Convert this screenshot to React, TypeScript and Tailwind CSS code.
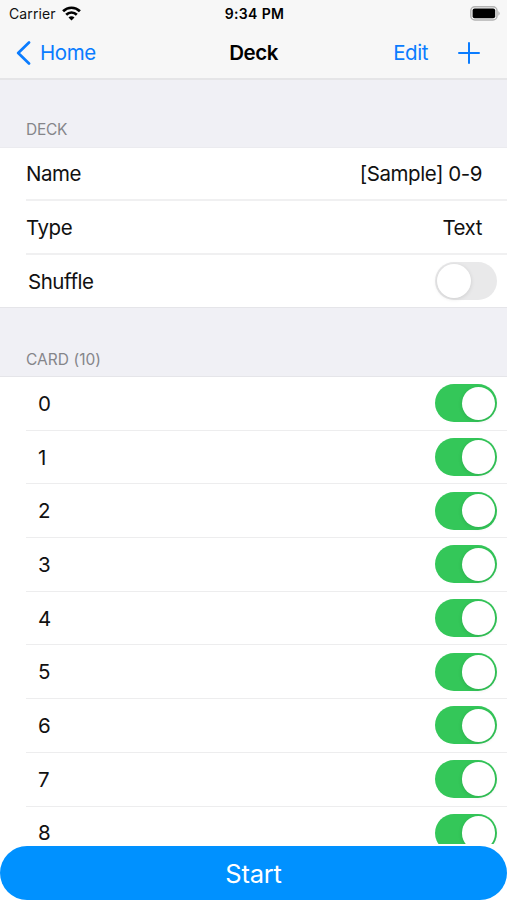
import React, { useState } from 'react';

const cards = ['0', '1', '2', '3', '4', '5', '6', '7', '8'];

interface ToggleProps {
  on: boolean;
  label: string;
  onChange: () => void;
}

const Toggle: React.FC<ToggleProps> = ({ on, label, onChange }) => (
  <button
    role="switch"
    aria-checked={on}
    aria-label={label}
    onClick={onChange}
    className={`flex h-[38px] w-[62px] shrink-0 items-center rounded-full px-[2px] ${
      on ? 'justify-end bg-[#34c759]' : 'justify-start bg-[#e9e9ea]'
    }`}
  >
    <span className="h-[33.5px] w-[33.5px] rounded-full bg-white shadow-[0_1px_4px_rgba(0,0,0,0.12)]" />
  </button>
);

const App: React.FC = () => {
  const [shuffle, setShuffle] = useState(false);
  const [enabled, setEnabled] = useState<boolean[]>(cards.map(() => true));

  const toggleCard = (index: number) =>
    setEnabled(enabled.map((value, i) => (i === index ? !value : value)));

  return (
    <div className="flex h-[900px] w-[507px] flex-col overflow-hidden bg-white font-['Inter','Liberation_Sans',sans-serif] text-[20.5px] tracking-[-0.45px] text-[#111]">
      {/* Status bar and navigation */}
      <header className="h-[80px] shrink-0 border-b-2 border-[#e5e5e7] bg-[#f7f7f7]">
        <div className="grid h-[27px] grid-cols-[1fr_auto_1fr] items-center pl-[9px] pr-[7px] text-[14px]">
          <div className="flex items-center gap-[6px] tracking-[0.1px]">
            <span>Carrier</span>
            <svg width="19" height="15" viewBox="0 0 19 15" fill="none" stroke="#000" strokeWidth="2.7">
              <path d="M1.1 5.2a12 12 0 0 1 16.8 0" />
              <path d="M4.2 8.7a7.5 7.5 0 0 1 10.6 0" />
              <path d="M9.5 14.4 6.5 11.4a4.2 4.2 0 0 1 6 0Z" fill="#000" stroke="none" />
            </svg>
          </div>
          <span className="text-center text-[14px] font-semibold tracking-[0.35px] text-black">9:34 PM</span>
          <svg className="justify-self-end" width="30" height="15" viewBox="0 0 30 15">
            <rect x="0.8" y="0.8" width="26.2" height="13.2" rx="4" fill="#f7f7f7" stroke="#b3b3b3" strokeWidth="1.5" />
            <rect x="2.6" y="2.6" width="22.6" height="9.6" rx="2" fill="#000" />
            <path d="M28.3 5.1q2.8 2.3 0 4.6Z" fill="#b3b3b3" />
          </svg>
        </div>
        <nav className="grid h-[52px] grid-cols-[1fr_auto_1fr] items-center px-[16px] text-[#0a7cff]">
          <button className="flex items-center gap-[9px]">
            <svg width="15" height="24" viewBox="0 0 15 24" fill="none" stroke="currentColor" strokeWidth="2.7" strokeLinecap="round" strokeLinejoin="round">
              <path d="M13 1.5 2.2 12 13 22.5" />
            </svg>
            <span>Home</span>
          </button>
          <h1 className="text-center font-semibold text-black">Deck</h1>
          <div className="flex items-center justify-end gap-[30px] pr-[11px]">
            <button>Edit</button>
            <button aria-label="Add card">
              <svg width="22" height="22" viewBox="0 0 22 22" fill="none" stroke="currentColor" strokeWidth="2" strokeLinecap="round">
                <path d="M11 1v20M1 11h20" />
              </svg>
            </button>
          </div>
        </nav>
      </header>

      <main className="h-[764px] shrink-0 overflow-hidden">
        <h2 className="flex h-[68px] items-end border-b border-[#ebebef] bg-[#f0f0f5] pb-[6px] pl-[26px] text-[15.5px] tracking-[-0.25px] text-[#85858a]">DECK</h2>
        <div className="pl-[26px]">
          <div className="flex h-[53px] items-center justify-between border-b-2 border-[#f0f0f1] pr-[25px] pt-[2px]">
            <span>Name</span>
            <span>[Sample] 0-9</span>
          </div>
          <div className="flex h-[54px] items-center justify-between border-b-2 border-[#f0f0f1] pr-[25px] pt-[2px]">
            <span>Type</span>
            <span>Text</span>
          </div>
          <div className="flex h-[52px] items-center justify-between pl-[2px] pr-[10px]">
            <span className="pt-[2px]">Shuffle</span>
            <Toggle on={shuffle} label="Shuffle" onChange={() => setShuffle(!shuffle)} />
          </div>
        </div>

        <h2 className="flex h-[70px] items-end border-y border-[#e5e5e9] bg-[#f0f0f5] pb-[5px] pl-[26px] text-[15.5px] tracking-[0.05px] text-[#85858a]">CARD (10)</h2>
        <ul className="pl-[26px]">
          {cards.map((card, index) => (
            <li key={card} className="flex h-[53.7px] items-center justify-between border-b-[1.5px] border-[#ededee] pl-[12px] pr-[10px]">
              <span className="pt-[2px]">{card}</span>
              <Toggle on={enabled[index]} label={`Card ${card}`} onChange={() => toggleCard(index)} />
            </li>
          ))}
        </ul>
      </main>

      <footer className="pt-[2px]">
        <button className="h-[54px] w-full rounded-full bg-[#0091ff] pt-[3px] text-[25.5px] tracking-[-0.2px] text-white">Start</button>
      </footer>
    </div>
  );
};

export default App;
